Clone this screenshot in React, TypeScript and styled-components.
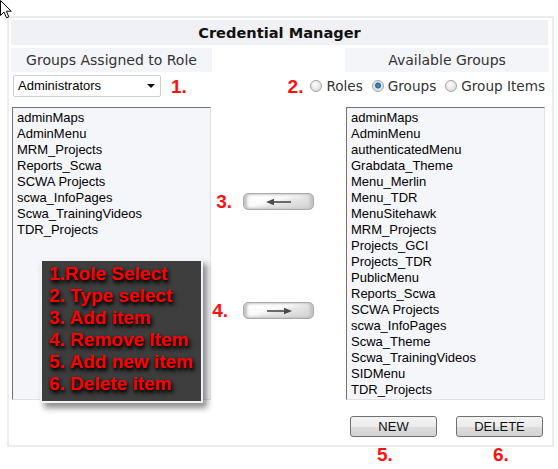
import styled, { createGlobalStyle } from "styled-components";

const GlobalStyle = createGlobalStyle`
  html, body {
    margin: 0;
    padding: 0;
    background: #ffffff;
  }
  body {
    font-family: "Liberation Sans", Arial, sans-serif;
  }
`;

const assigned = [
  "adminMaps",
  "AdminMenu",
  "MRM_Projects",
  "Reports_Scwa",
  "SCWA Projects",
  "scwa_InfoPages",
  "Scwa_TrainingVideos",
  "TDR_Projects",
];

const available = [
  "adminMaps",
  "AdminMenu",
  "authenticatedMenu",
  "Grabdata_Theme",
  "Menu_Merlin",
  "Menu_TDR",
  "MenuSitehawk",
  "MRM_Projects",
  "Projects_GCI",
  "Projects_TDR",
  "PublicMenu",
  "Reports_Scwa",
  "SCWA Projects",
  "scwa_InfoPages",
  "Scwa_Theme",
  "Scwa_TrainingVideos",
  "SIDMenu",
  "TDR_Projects",
];

const legend = [
  "1.Role Select",
  "2. Type select",
  "3. Add item",
  "4. Remove Item",
  "5. Add new item",
  "6. Delete item",
];

const Cursor = () => (
  <CursorSvg width="14" height="20" viewBox="0 0 14 20">
    <path
      d="M0.5 0.5 L0.5 15.5 L4 12 L6.5 17.8 L8.8 16.8 L6.4 11.2 L11.3 11.2 Z"
      fill="#ffffff"
      stroke="#000000"
      strokeWidth="1"
      strokeLinejoin="miter"
    />
  </CursorSvg>
);

const Arrow = ({ dir }: { dir: "left" | "right" }) => (
  <svg width="28" height="8" viewBox="0 0 28 8">
    {dir === "left" ? (
      <>
        <path d="M6 4 H26" stroke="#4a4a4a" strokeWidth="1.6" />
        <path d="M1 4 L9 0.8 L9 7.2 Z" fill="#4a4a4a" />
      </>
    ) : (
      <>
        <path d="M2 4 H22" stroke="#4a4a4a" strokeWidth="1.6" />
        <path d="M27 4 L19 0.8 L19 7.2 Z" fill="#4a4a4a" />
      </>
    )}
  </svg>
);

const Radio = ({ label, checked }: { label: string; checked?: boolean }) => (
  <RadioItem>
    <RadioDot $checked={checked} />
    {label}
  </RadioItem>
);

export default function App() {
  return (
    <Page>
      <GlobalStyle />
      <Cursor />
      <Panel>
        <TitleBar>Credential Manager</TitleBar>
        <Grid>
          <Header>Groups Assigned to Role</Header>
          <div />
          <Header>Available Groups</Header>

          <SelectRow>
            <FakeSelect>
              Administrators
              <Caret />
            </FakeSelect>
            <Step>1.</Step>
          </SelectRow>
          <RadioRow>
            <Step>2.</Step>
            <Radio label="Roles" />
            <Radio label="Groups" checked />
            <Radio label="Group Items" />
          </RadioRow>

          <ListBox>
            {assigned.map((g) => (
              <ListItem key={g}>{g}</ListItem>
            ))}
          </ListBox>
          <Mover>
            <MoveRow $top={92} $gap={11}>
              <Step>3.</Step>
              <ArrowButton>
                <Arrow dir="left" />
              </ArrowButton>
            </MoveRow>
            <MoveRow $top={90} $gap={15}>
              <Step>4.</Step>
              <ArrowButton>
                <Arrow dir="right" />
              </ArrowButton>
            </MoveRow>
          </Mover>
          <ListBox>
            {available.map((g) => (
              <ListItem key={g}>{g}</ListItem>
            ))}
          </ListBox>

          <div />
          <div />
          <ButtonRow>
            <ActionButton>NEW</ActionButton>
            <ActionButton>DELETE</ActionButton>
          </ButtonRow>
        </Grid>

        <Legend>
          {legend.map((l) => (
            <LegendLine key={l}>{l}</LegendLine>
          ))}
        </Legend>
      </Panel>
      <Footer>
        <FooterCell $indent={27}>
          <Step>5.</Step>
        </FooterCell>
        <FooterCell $indent={37}>
          <Step>6.</Step>
        </FooterCell>
      </Footer>
    </Page>
  );
}

const Page = styled.div`
  position: relative;
  width: 558px;
  height: 469px;
  padding: 16px 0 0 7px;
  box-sizing: border-box;
`;

const CursorSvg = styled.svg`
  position: absolute;
  left: 0;
  top: 0;
  z-index: 5;
`;

const Panel = styled.div`
  position: relative;
  width: 547px;
  box-sizing: border-box;
  border: 2px solid #ececec;
  padding: 2px 3px 8px 2px;
`;

const TitleBar = styled.div`
  height: 25px;
  line-height: 25px;
  background: #f0f1f4;
  text-align: center;
  font-family: "DejaVu Sans", sans-serif;
  font-weight: 700;
  font-size: 14.6px;
  color: #111111;
  margin-right: 1px;
`;

/* rows: headers, select/radios, lists, action buttons */
const Grid = styled.div`
  display: grid;
  grid-template-columns: 201px 133px 204px;
  grid-template-rows: 24px 22px 300px 34px;
  row-gap: 3px;
  margin-top: 3px;
  align-items: end;
`;

const Header = styled.div`
  align-self: stretch;
  background: #f4f5f9;
  text-align: center;
  line-height: 24px;
  font-family: "DejaVu Sans", sans-serif;
  font-size: 14px;
  color: #333333;
`;

const SelectRow = styled.div`
  display: flex;
  align-items: center;
  gap: 10px;
  padding-left: 2px;
`;

const FakeSelect = styled.div`
  position: relative;
  width: 148px;
  height: 22px;
  box-sizing: border-box;
  border: 1px solid #cfcfcf;
  border-radius: 2px;
  background: #ffffff;
  padding-left: 4px;
  font-size: 13px;
  line-height: 20px;
  color: #000000;
`;

const Caret = styled.span`
  position: absolute;
  right: 5px;
  top: 8px;
  width: 0;
  height: 0;
  border-left: 4px solid transparent;
  border-right: 4px solid transparent;
  border-top: 4px solid #111111;
`;

const Step = styled.span`
  font-family: "Liberation Sans", Arial, sans-serif;
  font-weight: 700;
  font-size: 19px;
  line-height: 19px;
  color: #ff1010;
`;

const RadioRow = styled.div`
  grid-column: 2 / 4;
  height: 22px;
  display: flex;
  align-items: center;
  justify-content: flex-end;
  gap: 9px;
  padding-right: 4px;
  font-family: "DejaVu Sans", sans-serif;
  font-size: 13.6px;
  color: #333333;

  & > span:first-child {
    margin-right: -2px;
  }
`;

const RadioItem = styled.label`
  display: flex;
  align-items: center;
  gap: 4px;
`;

const RadioDot = styled.span<{ $checked?: boolean }>`
  width: 12px;
  height: 12px;
  box-sizing: border-box;
  border-radius: 50%;
  border: 1px solid #a3a3a3;
  background: ${(p) =>
    p.$checked
      ? "radial-gradient(circle at 50% 45%, #3c9ad6 0, #1d6aa3 2.5px, #e8e8e8 3.5px, #dcdcdc 100%)"
      : "radial-gradient(circle at 40% 35%, #ffffff 0, #e4e4e4 60%, #cfcfcf 100%)"};
`;

const ListBox = styled.div`
  height: 293px;
  margin-left: 1px;
  width: 199px;
  box-sizing: border-box;
  border-style: solid;
  border-width: 1px;
  border-color: #737373 #e2e2e2 #e2e2e2 #737373;
  background: #f5f6fa;
  padding: 2px 4px;
  overflow: hidden;
`;

const ListItem = styled.div`
  font-size: 13px;
  line-height: 16px;
  color: #000000;
  white-space: nowrap;
`;

const Mover = styled.div`
  align-self: stretch;
  display: flex;
  flex-direction: column;
  align-items: flex-end;
  padding-right: 31px;
`;

const MoveRow = styled.div<{ $top: number; $gap: number }>`
  display: flex;
  align-items: center;
  gap: ${(p) => p.$gap}px;
  margin-top: ${(p) => p.$top}px;
`;

/* glossy pill with darker rounded ends */
const ArrowButton = styled.button`
  width: 71px;
  height: 17px;
  padding: 0;
  display: flex;
  align-items: center;
  justify-content: center;
  border: 1px solid #a9a9a9;
  border-radius: 5px;
  background: linear-gradient(166deg, #ffffff 0%, #fafafa 42%, #e4e4e4 58%, #d2d2d2 100%);
  box-shadow: inset 3px 0 3px #c2c2c2, inset -3px 0 3px #c2c2c2;
`;

const ButtonRow = styled.div`
  display: flex;
  gap: 19px;
  padding-left: 5px;
`;

const ActionButton = styled.button`
  width: 87px;
  height: 21px;
  padding: 0;
  border: 1px solid #707070;
  border-radius: 3px;
  background: linear-gradient(#f3f3f3 0%, #ebebeb 50%, #dddddd 51%, #d4d4d4 100%);
  font-family: "Liberation Sans", Arial, sans-serif;
  font-size: 13px;
  color: #111111;
`;

const Legend = styled.div`
  position: absolute;
  left: 31px;
  top: 241px;
  width: 163px;
  box-sizing: border-box;
  padding: 2px 0 6px 7px;
  background: #3e3e3e;
  border: 2px solid #f3f3f3;
  box-shadow: 4px 5px 6px rgba(0, 0, 0, 0.45);
`;

const LegendLine = styled.div`
  font-family: "Liberation Sans", Arial, sans-serif;
  font-weight: 700;
  font-size: 19px;
  line-height: 22px;
  color: #ff0000;
  white-space: nowrap;
  text-shadow: 2px 3px 5px rgba(0, 0, 0, 1), 1px 2px 3px rgba(0, 0, 0, 0.8);
`;

const Footer = styled.div`
  display: flex;
  gap: 19px;
  margin: -2px 0 0 343px;
`;

const FooterCell = styled.div<{ $indent: number }>`
  width: 87px;
  padding-left: ${(p) => p.$indent}px;
  box-sizing: border-box;
`;
